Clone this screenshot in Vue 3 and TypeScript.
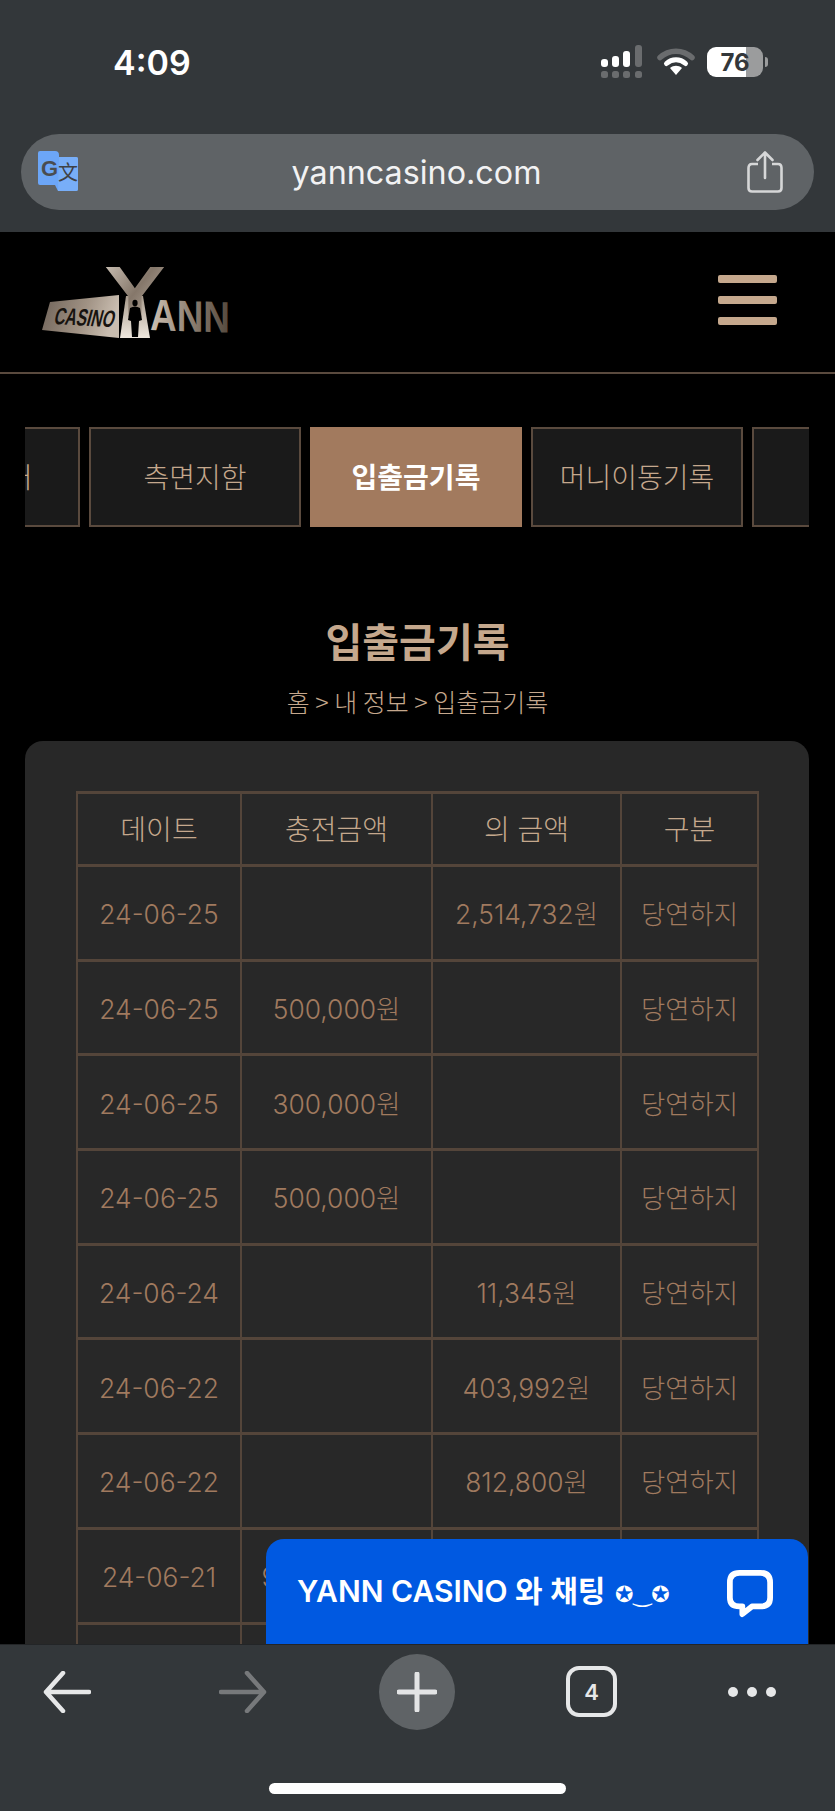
<script setup lang="ts">
interface HistoryRow {
  date: string
  charge: string
  exchange: string
  kind: string
}

const tabs = ['포인트센터', '측면지함', '입출금기록', '머니이동기록', '쿠폰']
const activeTab = '입출금기록'

const rows: HistoryRow[] = [
  { date: '24-06-25', charge: '', exchange: '2,514,732원', kind: '당연하지' },
  { date: '24-06-25', charge: '500,000원', exchange: '', kind: '당연하지' },
  { date: '24-06-25', charge: '300,000원', exchange: '', kind: '당연하지' },
  { date: '24-06-25', charge: '500,000원', exchange: '', kind: '당연하지' },
  { date: '24-06-24', charge: '', exchange: '11,345원', kind: '당연하지' },
  { date: '24-06-22', charge: '', exchange: '403,992원', kind: '당연하지' },
  { date: '24-06-22', charge: '', exchange: '812,800원', kind: '당연하지' },
  { date: '24-06-21', charge: '9,000,000원', exchange: '', kind: '당연하지' },
  { date: '24-06-21', charge: '', exchange: '', kind: '당연하지' },
]
</script>

<template>
  <div class="phone">
    <div class="top-chrome">
      <div class="status">
        <span class="time">4:09</span>
        <div class="status-icons">
          <svg class="signal" width="44" height="42" viewBox="0 0 44 42">
            <rect x="0" y="14" width="7" height="8" rx="3" fill="#fff" />
            <rect x="11" y="11" width="7" height="11" rx="3" fill="#fff" />
            <rect x="22" y="6" width="7" height="16" rx="3" fill="#fff" />
            <rect x="34" y="0" width="7" height="22" rx="3" fill="#6a6c6e" />
            <rect x="0" y="26" width="7" height="7" rx="2.5" fill="#6a6c6e" />
            <rect x="11" y="26" width="7" height="7" rx="2.5" fill="#6a6c6e" />
            <rect x="22" y="26" width="7" height="7" rx="2.5" fill="#6a6c6e" />
            <rect x="34" y="26" width="7" height="7" rx="2.5" fill="#6a6c6e" />
          </svg>
          <svg class="wifi" width="38" height="30" viewBox="0 0 38 30">
            <path d="M3 10.5 C12 2 26 2 35 10.5" fill="none" stroke="#6a6c6e" stroke-width="5.5" stroke-linecap="round" />
            <path d="M9.5 16.5 C15 11.5 23 11.5 28.5 16.5" fill="none" stroke="#fff" stroke-width="5" stroke-linecap="round" />
            <path d="M13 21 C16.5 18 21.5 18 25 21 L19 28 Z" fill="#fff" />
          </svg>
          <div class="battery">
            <div class="battery-body"><span>76</span></div>
            <div class="battery-nub"></div>
          </div>
        </div>
      </div>
      <div class="url-bar">
        <svg class="translate" width="42" height="42" viewBox="0 0 42 42">
          <path d="M2 0 H17 Q21 0 21 4 V6 H38 Q40 6 40 8 V38 Q40 40 38 40 H20 L17 34 H2 Q0 34 0 32 V2 Q0 0 2 0 Z" fill="#6ca6f7" />
          <path d="M21 6 H38 Q40 6 40 8 V38 Q40 40 38 40 H20 Z" fill="#78aef8" />
          <text x="3" y="25" class="translate-g">G</text>
          <text x="20" y="29" class="translate-zh">文</text>
        </svg>
        <span class="url">yanncasino.com</span>
        <svg class="share" width="36" height="42" viewBox="0 0 36 42">
          <path d="M11 13 H5 Q1.500 13 1.500 17 V37 Q1.500 40.500 5 40.500 H31 Q34.500 40.500 34.500 37 V17 Q34.500 13 31 13 H25" fill="none" stroke="#d6d7d8" stroke-width="2.600" />
          <path d="M18 27 V2 M10.500 9 L18 1.500 L25.500 9" fill="none" stroke="#d6d7d8" stroke-width="2.600" stroke-linecap="round" stroke-linejoin="round" />
        </svg>
      </div>
    </div>

    <div class="page">
      <header class="site-header">
        <svg class="logo" width="190" height="80" viewBox="0 0 190 80">
          <defs>
            <linearGradient id="plate" x1="0" y1="0" x2="1" y2="0.2">
              <stop offset="0" stop-color="#6e6258" />
              <stop offset="0.6" stop-color="#a09284" />
              <stop offset="1" stop-color="#c9bdb0" />
            </linearGradient>
            <linearGradient id="ygrad" x1="0" y1="0" x2="1" y2="1">
              <stop offset="0" stop-color="#d8cec2" />
              <stop offset="0.5" stop-color="#85776a" />
              <stop offset="1" stop-color="#cfc4b8" />
            </linearGradient>
            <linearGradient id="stem" x1="0" y1="0" x2="0" y2="1">
              <stop offset="0" stop-color="#a79a8c" />
              <stop offset="1" stop-color="#efe8de" />
            </linearGradient>
            <linearGradient id="anngrad" x1="0" y1="0" x2="1" y2="0">
              <stop offset="0" stop-color="#cfc2b4" />
              <stop offset="0.5" stop-color="#8f8173" />
              <stop offset="1" stop-color="#54483c" />
            </linearGradient>
          </defs>
          <polygon points="10,40 79,33 79,76 2,68" fill="url(#plate)" />
          <text class="logo-casino" transform="translate(13 62) rotate(3) skewX(-12) scale(1 1.400)" textLength="60" lengthAdjust="spacingAndGlyphs">CASINO</text>
          <text class="logo-ann" transform="translate(110 68) skewY(2)" textLength="80" lengthAdjust="spacingAndGlyphs">ANN</text>
          <polygon points="86,34 103,34 110,76 80,76" fill="url(#stem)" />
          <text class="logo-y" transform="translate(95 55) scale(0.920 0.720)" text-anchor="middle">Y</text>
          <ellipse cx="95" cy="41" rx="2.600" ry="3.200" fill="#000" />
          <path d="M90 46 Q95 43 100 46 L102 58 L99 59 L98 75 H92 L91 59 L88 58 Z" fill="#000" />
        </svg>
        <div class="hamburger"><span></span><span></span><span></span></div>
      </header>

      <div class="tab-strip">
        <div class="tab-track">
          <div v-for="tab in tabs" :key="tab" class="tab" :class="{ 'tab--active': tab === activeTab }">{{ tab }}</div>
        </div>
      </div>

      <h1 class="title">입출금기록</h1>
      <p class="crumb">홈 &gt; 내 정보 &gt; 입출금기록</p>

      <section class="card">
        <table class="history">
          <colgroup>
            <col class="col-date" />
            <col class="col-charge" />
            <col class="col-exchange" />
            <col class="col-kind" />
          </colgroup>
          <thead>
            <tr>
              <th>데이트</th>
              <th>충전금액</th>
              <th>의 금액</th>
              <th>구분</th>
            </tr>
          </thead>
          <tbody>
            <tr v-for="(row, i) in rows" :key="i">
              <td>{{ row.date }}</td>
              <td>{{ row.charge }}</td>
              <td>{{ row.exchange }}</td>
              <td>{{ row.kind }}</td>
            </tr>
          </tbody>
        </table>
      </section>

      <div class="chat">
        <span class="chat-label">YANN CASINO 와 채팅 <span class="chat-face">✪‿✪</span></span>
        <svg class="chat-icon" width="46" height="48" viewBox="0 0 48 50">
          <path d="M13 3 H35 Q45 3 45 13 V29 Q45 38 35 38 H26 L16 46 V38 H13 Q3 38 3 29 V13 Q3 3 13 3 Z" fill="none" stroke="#fff" stroke-width="6" stroke-linejoin="round" />
        </svg>
      </div>
    </div>

    <div class="bottom-chrome">
      <div class="toolbar">
        <svg class="nav-back" width="48" height="42" viewBox="0 0 48 42">
          <path d="M46 21 H3 M20 2 L3 21 L20 40" fill="none" stroke="#e6e7e8" stroke-width="4.500" stroke-linecap="round" stroke-linejoin="round" />
        </svg>
        <svg class="nav-forward" width="48" height="42" viewBox="0 0 48 42">
          <path d="M2 21 H45 M28 2 L45 21 L28 40" fill="none" stroke="#77797b" stroke-width="4.500" stroke-linecap="round" stroke-linejoin="round" />
        </svg>
        <div class="plus">
          <svg width="40" height="40" viewBox="0 0 40 40">
            <path d="M20 2 V38 M2 20 H38" fill="none" stroke="#e3e4e5" stroke-width="5" stroke-linecap="round" />
          </svg>
        </div>
        <div class="tab-count">4</div>
        <div class="dots"><i></i><i></i><i></i></div>
      </div>
      <div class="home-bar"></div>
    </div>
  </div>
</template>

<style>
html,
body {
  margin: 0;
  background: #000;
  overflow: hidden;
}
</style>

<style scoped>
.phone {
  width: 835px;
  height: 1811px;
  display: flex;
  flex-direction: column;
  overflow: hidden;
  background: #000;
  font-family: "Noto Sans CJK KR", "Noto Sans", sans-serif;
}

.top-chrome {
  height: 232px;
  flex-shrink: 0;
  background: #33373a;
  box-sizing: border-box;
  padding: 0 21px;
}

.status {
  height: 124px;
  margin-bottom: 10px;
  display: flex;
  align-items: center;
  justify-content: space-between;
  padding: 0 46px 0 92px;
}

.time {
  font-family: Inter, sans-serif;
  font-size: 34px;
  font-weight: 600;
  color: #fff;
}

.status-icons {
  display: flex;
  align-items: center;
  gap: 12px;
}

.signal {
  margin-top: 7px;
}

.battery {
  display: flex;
  align-items: center;
  gap: 2px;
}

.battery-body {
  width: 56px;
  height: 30px;
  border-radius: 9px;
  background: linear-gradient(90deg, #fff 0 70%, #9b9c9d 70%);
  display: flex;
  align-items: center;
  justify-content: center;
  font-family: Inter, sans-serif;
  font-size: 24px;
  font-weight: 700;
  color: #33373a;
}

.battery-nub {
  width: 3px;
  height: 10px;
  border-radius: 0 3px 3px 0;
  background: #9b9c9d;
}

.url-bar {
  height: 76px;
  border-radius: 38px;
  background: #5f6366;
  display: flex;
  align-items: center;
  justify-content: space-between;
  padding: 0 31px 0 17px;
}

.translate-g {
  font-family: "Liberation Sans", sans-serif;
  font-size: 22px;
  font-weight: 700;
  fill: #4a4d50;
}

.translate-zh {
  font-family: "Noto Sans CJK SC", sans-serif;
  font-size: 20px;
  fill: #3f4245;
}

.url {
  margin-left: 6px;
  font-family: Inter, sans-serif;
  font-size: 32.300px;
  color: #f2f2f3;
}

.page {
  flex: 1;
  min-height: 0;
  position: relative;
  overflow: hidden;
  background: #000;
}

.site-header {
  height: 140px;
  border-bottom: 2px solid #5a4a3e;
  display: flex;
  align-items: center;
  justify-content: space-between;
  padding: 0 58px 0 40px;
}

.logo-casino {
  font-family: "Liberation Sans", sans-serif;
  font-size: 17px;
  font-weight: 700;
  fill: #17130f;
}

.logo-y {
  font-family: "Liberation Sans", sans-serif;
  font-size: 100px;
  font-weight: 700;
  fill: url(#ygrad);
}

.logo-ann {
  font-family: "Liberation Sans", sans-serif;
  font-size: 44px;
  font-weight: 700;
  fill: url(#anngrad);
}

.hamburger {
  display: flex;
  flex-direction: column;
  gap: 13px;
  margin-bottom: 4px;
}

.hamburger span {
  display: block;
  width: 59px;
  height: 8px;
  border-radius: 2px;
  background: #c5a88d;
}

.tab-strip {
  margin: 53px 26px 0 25px;
  overflow: hidden;
}

.tab-track {
  display: flex;
  gap: 9px;
  margin-left: -157px;
}

.tab {
  width: 212px;
  height: 100px;
  flex-shrink: 0;
  box-sizing: border-box;
  border: 2px solid #5a4a3e;
  padding-bottom: 3px;
  background: #1a1a1a;
  color: #c5a88d;
  font-size: 28px;
  font-weight: 300;
  display: flex;
  align-items: center;
  justify-content: center;
  white-space: nowrap;
}

.tab:first-child {
  padding-right: 12px;
}

.tab--active {
  background: #a27a5e;
  border-color: #a27a5e;
  color: #fff;
  font-weight: 700;
}

.title {
  margin: 81px 0 0;
  text-align: center;
  font-size: 40px;
  line-height: 64px;
  font-weight: 700;
  color: #c5a88d;
}

.crumb {
  margin: 11px 0 0;
  text-align: center;
  font-size: 25px;
  line-height: 36px;
  font-weight: 300;
  color: #c5a88d;
}

.card {
  margin: 22px 26px 0 25px;
  padding: 50px 51px;
  border-radius: 18px;
  background: #282828;
}

.history {
  width: 681px;
  table-layout: fixed;
  border-collapse: collapse;
}

.col-date {
  width: 164px;
}

.col-charge {
  width: 191px;
}

.col-exchange {
  width: 189px;
}

.col-kind {
  width: 137px;
}

.history th,
.history td {
  border-style: solid;
  border-color: #54453a;
  border-width: 3px 2px;
  text-align: center;
  font-family: Inter, "Noto Sans CJK KR", sans-serif;
  font-weight: 300;
  white-space: nowrap;
}

.history th {
  height: 67px;
  padding: 0 0 3px;
  font-size: 28px;
  color: #c5a88d;
}

.history td {
  height: 91.700px;
  padding: 0;
  font-size: 26.400px;
  color: #a07a5f;
}

.history td:first-child {
  height: 88.700px;
  padding-top: 3px;
}

.chat {
  position: absolute;
  right: 27px;
  bottom: 0;
  width: 542px;
  height: 105px;
  box-sizing: border-box;
  padding: 32px 35px 0 31px;
  border-radius: 18px 18px 0 0;
  background: #0059e1;
  display: flex;
  justify-content: space-between;
  align-items: flex-start;
}

.chat-label {
  font-family: Inter, "Noto Sans CJK KR", sans-serif;
  font-size: 30px;
  line-height: 40px;
  font-weight: 600;
  color: #fff;
  white-space: nowrap;
}

.chat-face {
  margin-left: 2px;
  font-family: "DejaVu Sans", sans-serif;
  font-size: 22px;
  font-weight: 400;
}

.chat-icon {
  margin-top: -1px;
}

.bottom-chrome {
  height: 167px;
  flex-shrink: 0;
  box-sizing: border-box;
  border-top: 1px solid #232527;
  background: #33373a;
  display: flex;
  flex-direction: column;
  align-items: center;
}

.toolbar {
  width: 100%;
  box-sizing: border-box;
  padding: 1px 0 0 43px;
  height: 92px;
  display: flex;
  align-items: center;
}

.nav-forward {
  margin-left: 128px;
}

.plus {
  width: 76px;
  height: 76px;
  margin-left: 112px;
  border-radius: 50%;
  background: #5f6366;
  display: flex;
  align-items: center;
  justify-content: center;
}

.tab-count {
  width: 51px;
  height: 51px;
  margin-left: 111px;
  box-sizing: border-box;
  border: 4px solid #e6e7e8;
  border-radius: 13px;
  display: flex;
  align-items: center;
  justify-content: center;
  font-family: Inter, sans-serif;
  font-size: 22px;
  font-weight: 600;
  color: #e6e7e8;
}

.dots {
  display: flex;
  gap: 9px;
  margin-left: 111px;
}

.dots i {
  display: block;
  width: 10px;
  height: 10px;
  border-radius: 50%;
  background: #e6e7e8;
}

.home-bar {
  width: 297px;
  height: 11px;
  margin-top: 46px;
  border-radius: 6px;
  background: #fff;
}
</style>
